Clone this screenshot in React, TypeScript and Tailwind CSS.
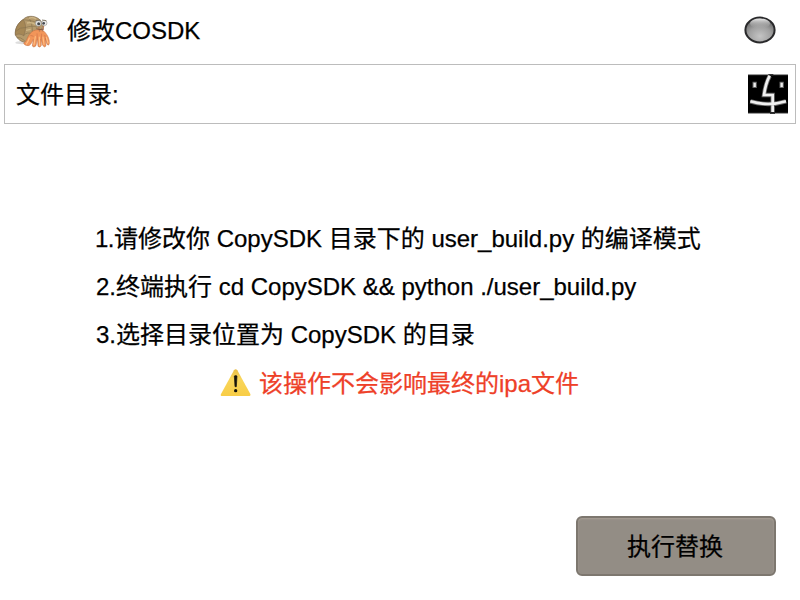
import React from 'react';

function HermitCrab() {
  return (
    <svg className="ml-2 mt-px h-[50px] w-[50px] shrink-0" viewBox="0 -6 150 150" fill="none">
      <ellipse cx="42" cy="98" rx="20" ry="5" fill="#dedede" />
      <path d="M46 28C56 17 76 16 90 25C104 34 108 50 99 62L71 76L56 97C42 98 26 87 22 73C20 56 30 38 46 28Z" fill="#b59a6c" stroke="#786547" strokeWidth="2" />
      <path d="M46 29C56 45 53 62 47 77C39 71 26 71 22 76C21 55 30 38 46 29Z" fill="#a58756" stroke="#80694a" strokeWidth="1.5" />
      <path d="M46 29Q65 30 91 38M60 20Q75 38 73 72M51 53Q74 45 88 52M47 77Q57 64 73 72M25 63Q36 51 51 53M27 82Q38 81 50 92" stroke="#83704d" strokeWidth="1.8" />
      <path d="M62 25Q73 20 84 27M57 39Q72 36 82 43M54 61L68 58" stroke="#cfb889" strokeWidth="4" />
      <path d="M47 99C58 94 58 75 72 65C84 57 104 57 112 68C119 76 125 88 124 100Q123 109 117 103L112 86L114 107Q110 115 104 106L99 87L100 106Q97 115 90 109L88 86L84 107Q77 115 73 108L76 88Q68 108 60 107Q49 107 47 99Z" fill="#f29559" stroke="#bd6c42" strokeWidth="1.5" strokeLinejoin="round" />
      <path d="M67 76L77 79M87 70L88 86M101 71L100 87M110 75L113 87" stroke="#ce744c" strokeWidth="2" />
      <path d="M64 84Q60 96 55 102M82 80L78 104M94 81L95 106M105 81L108 103M115 82L120 99" stroke="#ffbd82" strokeWidth="3.5" strokeLinecap="round" />
      <path d="M92 49L95 65M107 47L103 64" stroke="#b77b55" strokeWidth="4" />
      <circle cx="91" cy="40" r="9" fill="#e3e3e1" stroke="#777570" strokeWidth="1.5" />
      <circle cx="109" cy="39" r="8" fill="#eee" stroke="#898681" strokeWidth="1.5" />
      <circle cx="92" cy="41" r="4.5" fill="#42474b" />
      <circle cx="107" cy="40" r="4" fill="#454a50" />
      <path d="M83 32L97 30M102 30L115 32" stroke="#776b58" strokeWidth="2.5" />
      <path d="M85 56Q95 61 108 57" stroke="#704632" strokeWidth="2" />
    </svg>
  );
}

function Lamp() {
  return (
    <svg className="mr-6 h-7 w-8" viewBox="0 0 32 28">
      <defs>
        <radialGradient id="lamp" cx=".5" cy=".75" r=".65">
          <stop offset="0" stopColor="#c4c4c4" />
          <stop offset=".6" stopColor="#a0a0a0" />
          <stop offset="1" stopColor="#707070" />
        </radialGradient>
        <linearGradient id="shine" x1="0" y1="0" x2="0" y2="1">
          <stop offset="0" stopColor="#eee" />
          <stop offset="1" stopColor="#aaa" stopOpacity="0" />
        </linearGradient>
      </defs>
      <ellipse cx="16" cy="14" rx="14.6" ry="12.4" fill="url(#lamp)" stroke="#29292b" strokeWidth="2" />
      <ellipse cx="16" cy="7.5" rx="10" ry="5" fill="url(#shine)" />
    </svg>
  );
}

function Finder() {
  return (
    <svg className="mr-[7px] h-10 w-10" viewBox="18 18 120 120" fill="none">
      <path d="M18 21H138V135H18Z" fill="#000" />
      <path d="M18 20H138M18 136H138" stroke="#888" strokeWidth="3" />
      <path d="M79 19H94M84 136H99" stroke="#333" strokeWidth="5" />
      <path d="M38 41V60M119 41V60" stroke="#666" strokeWidth="13" />
      <path d="M38 44V57M119 44V57" stroke="#eee" strokeWidth="7" />
      <path d="M83 24Q70 49 66 81H92V132M25 100Q78 116 132 100" stroke="#666" strokeWidth="13" />
      <path d="M83 23Q70 49 66 81H92V132M25 100Q78 116 132 100" stroke="#f0f0f0" strokeWidth="8" />
    </svg>
  );
}

function Warning() {
  return (
    <svg className="h-10 w-10 shrink-0" viewBox="0 2 120 120">
      <defs>
        <linearGradient id="warn" x1="0" y1="0" x2="0" y2="1">
          <stop offset="0" stopColor="#e8bd47" />
          <stop offset=".35" stopColor="#f9d65b" />
          <stop offset="1" stopColor="#f8cd46" />
        </linearGradient>
      </defs>
      <path d="M57 24Q62 18 67 24L106 95Q108 101 101 101H22Q15 101 18 95Z" fill="url(#warn)" />
      <path d="M58 41Q62 38 66 41L64 73H60Z" fill="#15120b" stroke="#15120b" strokeWidth="2" />
      <circle cx="62" cy="85" r="5" fill="#15120b" />
    </svg>
  );
}

export default function App() {
  return (
    <main className="flex h-[600px] w-[800px] flex-col overflow-hidden bg-white font-['Liberation_Sans','Noto_Sans_CJK_SC',sans-serif] text-2xl leading-[48px] text-black [-webkit-text-stroke:0.25px_currentColor]">
      <header className="flex h-16 shrink-0 items-center justify-between pb-1">
        <div className="flex items-center pt-1">
          <HermitCrab />
          <h1 className="mb-[3px] ml-[9px]">修改COSDK</h1>
        </div>
        <Lamp />
      </header>
      <section className="mx-1 flex h-[60px] shrink-0 items-center justify-between border border-[#bcbcbc] pl-[11px]">
        <span className="pt-[2px]">文件目录:</span>
        <Finder />
      </section>
      <section className="ml-24 mt-[91px] whitespace-nowrap">
        <p className="-ml-px"><span className="tracking-[-0.5px]">1.</span>请修改你 CopySDK 目录下的 user_build.py 的编译模式</p>
        <p>2.终端执行 cd CopySDK &amp;&amp; python ./user_build.py</p>
        <p>3.选择目录位置为 CopySDK 的目录</p>
        <p className="ml-[119px] flex h-12 items-center text-[#ee4028]">
          <Warning />
          <span className="ml-1 h-12 pt-px">该操作不会影响最终的ipa文件</span>
        </p>
      </section>
      <button className="mr-6 mt-[109px] h-[60px] w-[200px] shrink-0 self-end rounded-md border-2 border-[#7d776f] bg-[#938d85] pr-[2px] pt-[2px] shadow-[inset_0_1px_2px_#aaa197]">执行替换</button>
    </main>
  );
}
